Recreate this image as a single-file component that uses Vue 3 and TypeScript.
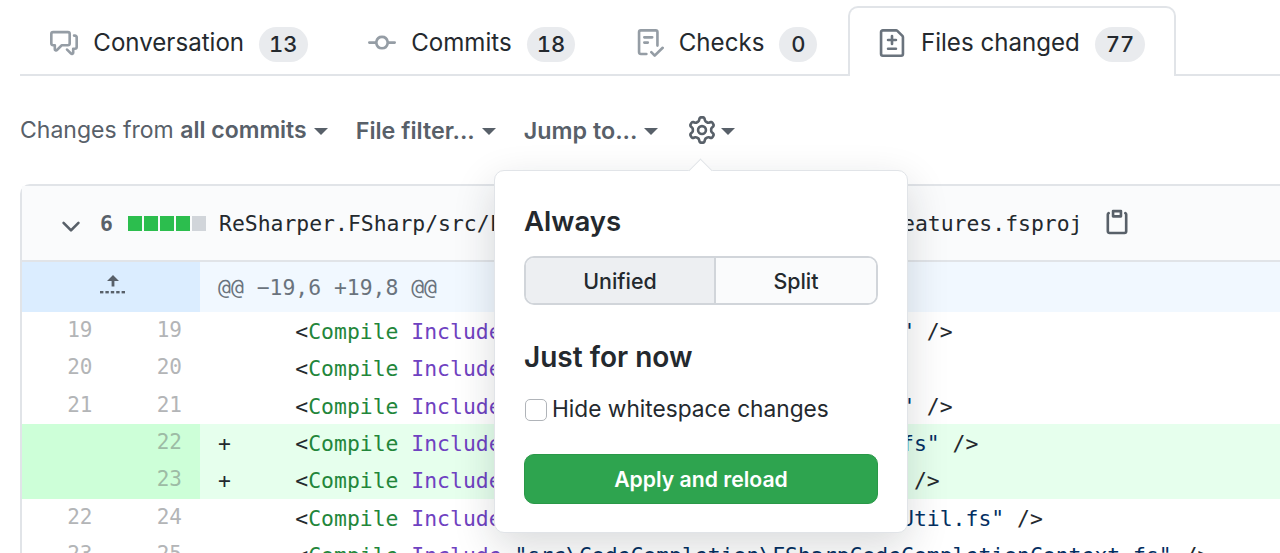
<script setup lang="ts">
interface Tab { label: string; count: string; icon: string; selected?: boolean }
interface Row { left: string; right: string; lead: string; path: string; added?: boolean }

const tabs: Tab[] = [
  { label: 'Conversation', count: '13', icon: 'M1.5 2.75a.25.25 0 01.25-.25h8.5a.25.25 0 01.25.25v5.5a.25.25 0 01-.25.25h-3.5a.75.75 0 00-.53.22L3.5 11.44V9.25a.75.75 0 00-.75-.75h-1a.25.25 0 01-.25-.25v-5.5zM1.75 1A1.75 1.75 0 000 2.75v5.5C0 9.216.784 10 1.75 10H2v1.543a1.457 1.457 0 002.487 1.03L7.061 10h3.189A1.75 1.75 0 0012 8.25v-5.5A1.75 1.75 0 0010.25 1h-8.5zM14.5 4.75a.25.25 0 00-.25-.25h-.5a.75.75 0 110-1.5h.5c.966 0 1.75.784 1.75 1.75v5.5A1.75 1.75 0 0114.25 12H14v1.543a1.457 1.457 0 01-2.487 1.03L9.22 12.28a.75.75 0 111.06-1.06l2.22 2.22v-2.19a.75.75 0 01.75-.75h1a.25.25 0 00.25-.25v-5.5z' },
  { label: 'Commits', count: '18', icon: 'M10.5 7.75a2.5 2.5 0 11-5 0 2.5 2.5 0 015 0zm1.43.75a4.002 4.002 0 01-7.86 0H.75a.75.75 0 110-1.5h3.32a4.001 4.001 0 017.86 0h3.32a.75.75 0 110 1.5h-3.32z' },
  { label: 'Checks', count: '0', icon: 'M2.5 1.75a.25.25 0 01.25-.25h8.5a.25.25 0 01.25.25v7.736a.75.75 0 101.5 0V1.75A1.75 1.75 0 0011.25 0h-8.5A1.75 1.75 0 001 1.75v11.5c0 .966.784 1.75 1.75 1.75h3.17a.75.75 0 000-1.5H2.75a.25.25 0 01-.25-.25V1.75zM4.75 4a.75.75 0 000 1.5h4.5a.75.75 0 000-1.5h-4.5zM4 7.75A.75.75 0 014.75 7h2a.75.75 0 010 1.5h-2A.75.75 0 014 7.75zm11.774 3.537a.75.75 0 00-1.048-1.074L10.7 14.145 9.281 12.72a.75.75 0 00-1.062 1.058l1.943 1.95a.75.75 0 001.055.008l4.557-4.45z' },
  { label: 'Files changed', count: '77', selected: true, icon: 'M2.75 1.5a.25.25 0 00-.25.25v12.5c0 .138.112.25.25.25h10.5a.25.25 0 00.25-.25V4.664a.25.25 0 00-.073-.177l-2.914-2.914a.25.25 0 00-.177-.073H2.75zM1 1.75C1 .784 1.784 0 2.75 0h7.586c.464 0 .909.184 1.237.513l2.914 2.914c.329.328.513.773.513 1.237v9.586A1.75 1.75 0 0113.25 16H2.75A1.75 1.75 0 011 14.25V1.75zm7 1.5a.75.75 0 01.75.75v1.5h1.5a.75.75 0 010 1.5h-1.5v1.5a.75.75 0 01-1.5 0V7h-1.5a.75.75 0 010-1.5h1.5V4A.75.75 0 018 3.25zm-3 8a.75.75 0 01.75-.75h4.5a.75.75 0 010 1.5h-4.5a.75.75 0 01-.75-.75z' },
]

const gear = 'M7.429 1.525a6.593 6.593 0 011.142 0c.036.003.108.036.137.146l.289 1.105c.147.56.55.967.997 1.189.174.086.341.183.501.29.417.278.97.423 1.53.27l1.102-.303c.11-.03.175.016.195.046.219.31.41.641.573.989.014.031.022.11-.059.19l-.815.806c-.411.406-.562.957-.53 1.456a4.588 4.588 0 010 .582c-.032.499.119 1.05.53 1.456l.815.806c.08.08.073.159.059.19a6.494 6.494 0 01-.573.99c-.02.029-.086.074-.195.045l-1.103-.303c-.559-.153-1.112-.008-1.529.27-.16.107-.327.204-.5.29-.449.222-.851.628-.998 1.189l-.289 1.105c-.029.11-.101.143-.137.146a6.613 6.613 0 01-1.142 0c-.036-.003-.108-.037-.137-.146l-.289-1.105c-.147-.56-.55-.967-.997-1.189a4.502 4.502 0 01-.501-.29c-.417-.278-.97-.423-1.53-.27l-1.102.303c-.11.03-.175-.016-.195-.046a6.492 6.492 0 01-.573-.989c-.014-.031-.022-.11.059-.19l.815-.806c.411-.406.562-.957.53-1.456a4.587 4.587 0 010-.582c.032-.499-.119-1.05-.53-1.456l-.815-.806c-.08-.08-.073-.159-.059-.19a6.44 6.44 0 01.573-.99c.02-.029.086-.075.195-.045l1.103.303c.559.153 1.112.008 1.529-.27.16-.107.327-.204.5-.29.449-.222.851-.628.998-1.189l.289-1.105c.029-.11.101-.143.137-.146zM8 0c-.236 0-.47.01-.701.03-.743.065-1.29.615-1.458 1.261l-.29 1.106c-.017.066-.078.158-.211.224a5.994 5.994 0 00-.668.386c-.123.082-.233.09-.3.071L3.27 2.776c-.644-.177-1.392.02-1.82.63a7.977 7.977 0 00-.704 1.217c-.315.675-.111 1.422.363 1.891l.815.806c.05.048.098.147.088.294a6.084 6.084 0 000 .772c.01.147-.038.246-.088.294l-.815.806c-.474.469-.678 1.216-.363 1.891.2.428.436.835.704 1.218.428.609 1.176.806 1.82.63l1.103-.303c.066-.019.176-.011.299.071.213.143.436.272.668.386.133.066.194.158.212.224l.289 1.106c.169.646.715 1.196 1.458 1.26a8.094 8.094 0 001.402 0c.743-.064 1.29-.614 1.458-1.26l.29-1.106c.017-.066.078-.158.211-.224a5.98 5.98 0 00.668-.386c.123-.082.233-.09.3-.071l1.102.302c.644.177 1.392-.02 1.82-.63.268-.382.505-.789.704-1.217.315-.675.111-1.422-.364-1.891l-.814-.806c-.05-.048-.098-.147-.088-.294a6.1 6.1 0 000-.772c-.01-.147.039-.246.088-.294l.814-.806c.475-.469.679-1.216.364-1.891a7.992 7.992 0 00-.704-1.218c-.428-.609-1.176-.806-1.82-.63l-1.103.303c-.066.019-.176.011-.299-.071a5.991 5.991 0 00-.668-.386c-.133-.066-.194-.158-.212-.224L10.16 1.29C9.99.645 9.444.095 8.701.031A8.094 8.094 0 008 0zm1.5 8a1.5 1.5 0 11-3 0 1.5 1.5 0 013 0zM11 8a3 3 0 11-6 0 3 3 0 016 0z'
const clippy = 'M5.75 1a.75.75 0 00-.75.75v3c0 .414.336.75.75.75h4.5a.75.75 0 00.75-.75v-3a.75.75 0 00-.75-.75h-4.5zm.75 3V2.5h3V4h-3zm-2.874-.467a.75.75 0 00-.752-1.298A1.75 1.75 0 002 3.75v9.5c0 .966.784 1.75 1.75 1.75h8.5A1.75 1.75 0 0014 13.25v-9.5a1.75 1.75 0 00-.874-1.515.75.75 0 10-.752 1.298.25.25 0 01.126.217v9.5a.25.25 0 01-.25.25h-8.5a.25.25 0 01-.25-.25v-9.5a.25.25 0 01.126-.217z'
const chevron = 'M12.78 6.22a.75.75 0 010 1.06l-4.25 4.25a.75.75 0 01-1.06 0L3.22 7.28a.75.75 0 011.06-1.06L8 9.94l3.72-3.72a.75.75 0 011.06 0z'

const plain = '      '
const plus = '+     '
const rows: Row[] = [
  { left: '19', right: '19', lead: plain, path: 'src\\Daemon\\Cs\\FSharpErrors.fs' },
  { left: '20', right: '20', lead: plain, path: 'src\\Daemon\\Highlights.fs' },
  { left: '21', right: '21', lead: plain, path: 'src\\Daemon\\Cs\\FSharpStages.fs' },
  { left: '', right: '22', lead: plus, path: 'src\\CodeCompletion\\FSharpRef.fs', added: true },
  { left: '', right: '23', lead: plus, path: 'src\\CodeCompletion\\FSharp.fs', added: true },
  { left: '22', right: '24', lead: plain, path: 'src\\CodeCompletion\\FSharpItemUtil.fs' },
  { left: '23', right: '25', lead: plain, path: 'src\\CodeCompletion\\FSharpCodeCompletionContext.fs' },
]
</script>

<template>
  <div class="page">
    <nav class="tabs">
      <a v-for="t in tabs" :key="t.label" class="tab" :class="{ selected: t.selected }">
        <svg class="tab-icon" viewBox="0 0 16 16" aria-hidden="true"><path fill-rule="evenodd" :d="t.icon" /></svg>
        <span class="tab-label">{{ t.label }}</span>
        <span class="counter">{{ t.count }}</span>
      </a>
    </nav>

    <div class="toolbar">
      <span class="tool">Changes from&nbsp;<b>all commits</b><i class="caret"></i></span>
      <span class="tool strong">File filter...<i class="caret"></i></span>
      <span class="tool strong">Jump to...<i class="caret"></i></span>
      <span class="tool gear">
        <svg class="gear-icon" viewBox="0 0 16 16" aria-hidden="true"><path fill-rule="evenodd" :d="gear" /></svg>
        <i class="caret"></i>
      </span>
    </div>

    <section class="card">
      <header class="file-head">
        <svg class="chev" viewBox="0 0 16 16" aria-hidden="true"><path fill-rule="evenodd" :d="chevron" /></svg>
        <span class="stat-num">6</span>
        <span class="stat">
          <i class="on"></i><i class="on"></i><i class="on"></i><i class="on"></i><i></i>
        </span>
        <span class="file-name">ReSharper.FSharp/src/FSharp.Psi.Features/FSharp.Psi.Features.fsproj</span>
        <svg class="clip" viewBox="0 0 16 16" aria-hidden="true"><path fill-rule="evenodd" :d="clippy" /></svg>
      </header>

      <div class="line hunk">
        <div class="gutter">
          <svg class="unfold" viewBox="0 0 26 20" aria-hidden="true">
            <path d="M13 0 L19 6 H14.4 V11.5 H11.6 V6 H7 Z" />
            <rect x="0" y="16" width="3.4" height="2.4" /><rect x="5.4" y="16" width="3.4" height="2.4" />
            <rect x="10.8" y="16" width="3.4" height="2.4" /><rect x="16.2" y="16" width="3.4" height="2.4" />
            <rect x="21.6" y="16" width="3.4" height="2.4" />
          </svg>
        </div>
        <code class="code hunk-text">@@ −19,6 +19,8 @@</code>
      </div>

      <div v-for="r in rows" :key="r.right" class="line row" :class="{ added: r.added }">
        <div class="gutter nums"><span>{{ r.left }}</span><span>{{ r.right }}</span></div>
        <code class="code">{{ r.lead }}&lt;<span class="tag">Compile</span> <span class="attr">Include</span>=<span class="str">"{{ r.path }}"</span> /&gt;</code>
      </div>
    </section>

    <aside class="popover">
      <h4>Always</h4>
      <div class="segmented">
        <span class="seg active">Unified</span>
        <span class="seg">Split</span>
      </div>
      <h4 class="second">Just for now</h4>
      <label class="check"><span class="box"></span>Hide whitespace changes</label>
      <button class="apply" type="button">Apply and reload</button>
    </aside>
  </div>
</template>

<style>
html, body { margin: 0; background: #fff; overflow: hidden; }
</style>

<style scoped>
.page {
  position: relative;
  height: 553px;
  overflow: hidden;
  padding-left: 20px;
  font-family: Inter, "Liberation Sans", sans-serif;
  color: #24292e;
  box-sizing: border-box;
}
.tabs {
  display: flex;
  height: 76px;
  box-sizing: border-box;
  padding-top: 6px;
  border-bottom: 2px solid #e1e4e8;
}
.tab {
  display: flex;
  align-items: center;
  height: 68px;
  padding: 3px 28.3px 0;
  box-sizing: border-box;
  font-size: 24.1px;
  border: 2px solid transparent;
  border-bottom: 0;
}
.tab.selected {
  background: #fff;
  border-color: #e1e4e8;
  border-radius: 10px 10px 0 0;
  height: 70px;
  margin-bottom: -2px;
  padding-bottom: 2px;
  padding-right: 29px;
}
.tab-icon { width: 28px; height: 28px; fill: #959da5; flex: none; }
.tab.selected .tab-icon { fill: #6a737d; }
.tab-label { margin: 0 15px; }
.counter {
  min-width: 18px;
  margin-top: 3px;
  padding: 0 10px;
  height: 35px;
  line-height: 35px;
  border-radius: 18px;
  background: #e9ebee;
  font-size: 22px;
  font-weight: 500;
  font-feature-settings: "tnum";
  text-align: center;
}
.selected .counter { padding: 0 11px; }
.toolbar {
  display: flex;
  align-items: center;
  gap: 28px;
  height: 108px;
  font-size: 23px;
  color: #586069;
}
.tool { display: flex; align-items: center; white-space: pre; }
.tool b, .strong { font-weight: 600; }
.strong { font-size: 23.3px; }
.caret {
  width: 0;
  height: 0;
  margin-left: 7px;
  margin-top: 2px;
  border-top: 7px solid #586069;
  border-left: 7.5px solid transparent;
  border-right: 7.5px solid transparent;
}
.gear { margin-left: 2px; }
.gear-icon { width: 28px; height: 28px; fill: #586069; }
.gear .caret { margin-left: 5px; }
.card {
  width: 1400px;
  border: 2px solid #e1e4e8;
  border-radius: 10px 10px 0 0;
  border-right: 0;
}
.file-head {
  display: flex;
  align-items: center;
  height: 76px;
  padding-left: 35px;
  background: #fafbfc;
  border-bottom: 2px solid #e1e4e8;
  box-sizing: border-box;
  font-family: "DejaVu Sans Mono", monospace;
  font-size: 21.42px;
}
.chev { width: 28px; height: 28px; fill: #586069; margin-right: 15px; flex: none; margin-top: 3px; }
.stat-num { font-weight: 700; color: #586069; font-size: 21.4px; width: 28px; }
.stat { display: flex; margin-right: 11px; }
.stat i { width: 14px; height: 15px; margin-right: 2px; background: #d1d5da; }
.stat i.on { background: #2cbe4e; }
.file-name { white-space: pre; }
.clip { width: 28px; height: 28px; fill: #586069; margin-left: 21px; flex: none; margin-top: -2px; }
.line { display: flex; }
.gutter { width: 178px; flex: none; }
.hunk { height: 50px; background: #f1f8ff; }
.hunk .gutter { background: #dbedff; display: flex; justify-content: center; }
.unfold { width: 26px; height: 20px; fill: #586069; margin-top: 13px; margin-left: 4px; }
.code {
  font-family: "DejaVu Sans Mono", monospace;
  font-size: 21.42px;
  white-space: pre;
  padding-left: 18px;
  padding-top: 1px;
  line-height: 37.33px;
}
.hunk-text { color: #6a737d; line-height: 50px; font-size: 21.4px; }
.row { height: 37.33px; }
.nums {
  display: grid;
  grid-template-columns: 88.5px 89.5px;
  font-family: "DejaVu Sans Mono", monospace;
  font-size: 21px;
  line-height: 37.33px;
  color: #b3b5b7;
}
.nums span { text-align: right; padding-right: 18px; }
.added { background: #e6ffed; }
.added .nums { background: #cdffd8; color: #9dbba5; }
.tag { color: #22863a; }
.attr { color: #6f42c1; }
.str { color: #032f62; }
.popover {
  position: absolute;
  left: 494px;
  top: 170px;
  width: 414px;
  height: 363px;
  box-sizing: border-box;
  padding: 32px 29px 28px;
  background: #fff;
  border: 1.5px solid #e1e4e8;
  border-radius: 10px;
  box-shadow: 0 14px 42px rgba(27, 31, 35, 0.16);
}
.popover::before {
  content: "";
  position: absolute;
  left: 197px;
  top: -9px;
  width: 16px;
  height: 16px;
  background: #fff;
  border-left: 1.5px solid #e1e4e8;
  border-top: 1.5px solid #e1e4e8;
  transform: rotate(45deg);
}
h4 {
  margin: 0;
  font-size: 27.6px;
  font-weight: 600;
  line-height: 36px;
}
.second { margin-top: 34px; font-size: 28px; }
.segmented {
  display: flex;
  margin-top: 17px;
  height: 49px;
  box-sizing: border-box;
  border: 2px solid #d1d5da;
  border-radius: 10px;
  overflow: hidden;
}
.seg {
  display: flex;
  align-items: center;
  justify-content: center;
  flex: 1;
  font-size: 21.4px;
  font-weight: 500;
  background: #fafbfc;
}
.seg.active {
  flex: none;
  width: 188px;
  background: #edeff2;
  border-right: 2px solid #d1d5da;
}
.check {
  display: flex;
  align-items: center;
  gap: 5px;
  margin-top: 15px;
  height: 36px;
  font-size: 22.7px;
}
.box {
  width: 22px;
  height: 22px;
  margin-left: 1px;
  margin-top: 3px;
  box-sizing: border-box;
  border: 1.5px solid #b0b4b9;
  border-radius: 5px;
}
.apply {
  display: block;
  width: 100%;
  height: 50px;
  margin-top: 28px;
  border: 1.5px solid #2a9848;
  border-radius: 10px;
  background: #2ea44f;
  color: #fff;
  font: 600 21.2px Inter, "Liberation Sans", sans-serif;
}
</style>
